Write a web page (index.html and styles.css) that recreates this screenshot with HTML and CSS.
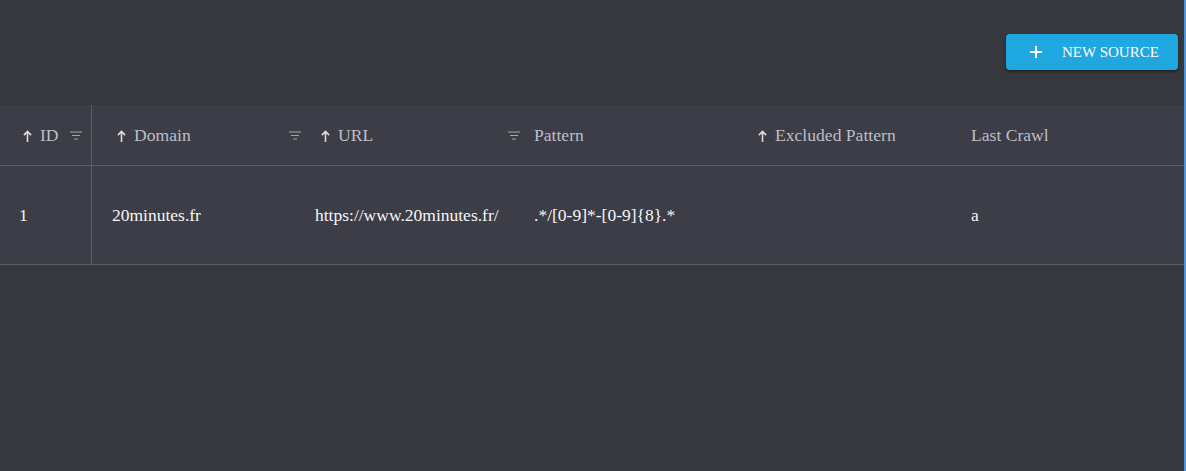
FILE: index.html
```html
<!DOCTYPE html>
<html lang="en">
<head>
<meta charset="utf-8">
<title>Sources</title>
<link rel="stylesheet" href="styles.css">
</head>
<body>
<div class="page">
  <div class="toolbar">
    <button class="btn-new">
      <svg class="plus" width="12" height="12" viewBox="0 0 12 12"><path d="M6 0v12M0 6h12" stroke="#fff" stroke-width="2"/></svg>
      <span>New Source</span>
    </button>
  </div>
  <div class="grid">
    <div class="hcell c-id">
      <svg class="arrow" width="9" height="12" viewBox="0 0 9 12"><path d="M4.5 1.6V12M0.9 5.1L4.5 1.4 8.1 5.1" fill="none" stroke="#dcdce0" stroke-width="1.6"/></svg>
      <span class="htext">ID</span>
      <svg class="filter f-id" width="12" height="9" viewBox="0 0 12 9"><path d="M0 1h12M2 4.5h8M4 8h4" stroke="#a4a4ac" stroke-width="1.2"/></svg>
    </div>
    <div class="hcell c-domain">
      <svg class="arrow" width="9" height="12" viewBox="0 0 9 12"><path d="M4.5 1.6V12M0.9 5.1L4.5 1.4 8.1 5.1" fill="none" stroke="#dcdce0" stroke-width="1.6"/></svg>
      <span class="htext">Domain</span>
      <svg class="filter f-edge" width="12" height="9" viewBox="0 0 12 9"><path d="M0 1h12M2 4.5h8M4 8h4" stroke="#a4a4ac" stroke-width="1.2"/></svg>
    </div>
    <div class="hcell c-url">
      <svg class="arrow" width="9" height="12" viewBox="0 0 9 12"><path d="M4.5 1.6V12M0.9 5.1L4.5 1.4 8.1 5.1" fill="none" stroke="#dcdce0" stroke-width="1.6"/></svg>
      <span class="htext">URL</span>
      <svg class="filter f-edge" width="12" height="9" viewBox="0 0 12 9"><path d="M0 1h12M2 4.5h8M4 8h4" stroke="#a4a4ac" stroke-width="1.2"/></svg>
    </div>
    <div class="hcell c-plain">
      <span class="htext">Pattern</span>
    </div>
    <div class="hcell c-plain">
      <svg class="arrow" width="9" height="12" viewBox="0 0 9 12"><path d="M4.5 1.6V12M0.9 5.1L4.5 1.4 8.1 5.1" fill="none" stroke="#dcdce0" stroke-width="1.6"/></svg>
      <span class="htext">Excluded Pattern</span>
    </div>
    <div class="hcell c-plain">
      <span class="htext">Last Crawl</span>
    </div>

    <div class="bcell b-id">1</div>
    <div class="bcell">20minutes.fr</div>
    <div class="bcell">https://www.20minutes.fr/</div>
    <div class="bcell">.*/[0-9]*-[0-9]{8}.*</div>
    <div class="bcell"></div>
    <div class="bcell">a</div>
  </div>
</div>
</body>
</html>
```

FILE: styles.css
```css
html, body {
  margin: 0;
  padding: 0;
  height: 100%;
}
body {
  background: #35383c;
  font-family: "Liberation Serif", "Times New Roman", serif;
  border-right: 2px solid #4f95d8;
  box-sizing: border-box;
  overflow: hidden;
}
.page {
  width: 1184px;
}
.toolbar {
  height: 105px;
  display: flex;
  justify-content: flex-end;
  align-items: flex-start;
  padding: 34px 6px 0 0;
  box-sizing: border-box;
}
.btn-new {
  width: 172px;
  height: 36px;
  background: #1fa7df;
  border: none;
  border-radius: 4px;
  box-shadow: 0 2px 3px rgba(0, 0, 0, 0.35);
  color: #fff;
  font-family: "Liberation Serif", "Times New Roman", serif;
  font-size: 15px;
  text-transform: uppercase;
  display: flex;
  align-items: center;
  padding: 0 0 0 24px;
  box-sizing: border-box;
  cursor: pointer;
}
.plus {
  margin-right: 20px;
}
.grid {
  display: grid;
  grid-template-columns: 92px 203px 219px 224px 213px 1fr;
  background: #3c3d46;
}
.hcell {
  height: 60px;
  box-sizing: border-box;
  padding-top: 1px;
  border-bottom: 1px solid #5c5e66;
  display: flex;
  align-items: center;
  color: #bebec6;
  font-size: 17.6px;
}
.grid .hcell {
  height: 61px;
}
.hcell .arrow {
  margin-right: 8px;
  flex: none;
}
.c-id {
  padding-left: 23px;
  border-right: 1px solid #5c5e66;
}
.c-domain {
  padding-left: 25px;
}
.c-url {
  padding-left: 26px;
}
.c-plain {
  padding-left: 20px;
}
.filter {
  flex: none;
  margin-left: auto;
}
.f-id {
  margin-right: 9px;
}
.f-edge {
  margin-right: -6px;
  position: relative;
  z-index: 1;
}
.bcell {
  height: 98px;
  border-bottom: 1px solid #5c5e66;
  display: flex;
  align-items: center;
  padding-left: 20px;
  color: #f6f6f8;
  font-size: 17.5px;
  white-space: nowrap;
}
.b-id {
  padding-left: 19px;
  border-right: 1px solid #5c5e66;
}
```
